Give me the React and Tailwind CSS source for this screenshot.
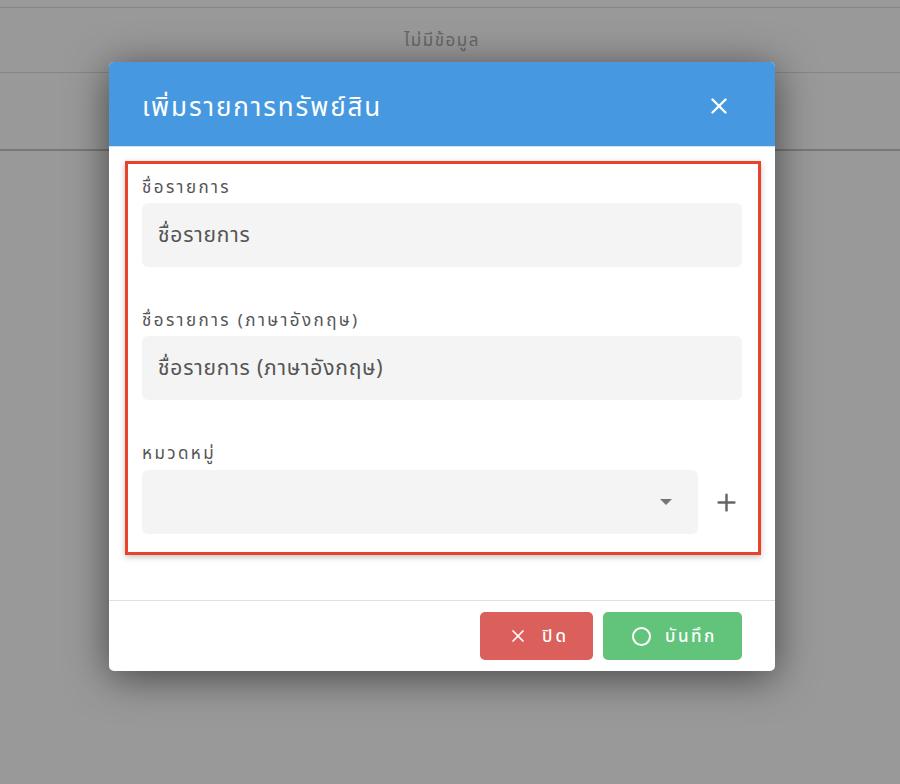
import { X, Plus } from 'lucide-react'

const font = { fontFamily: '"Noto Sans", "Noto Sans Thai", sans-serif' }

function Field({ label, placeholder }) {
  return (
    <div>
      <div className="text-[17px] leading-6 tracking-[2.4px] text-[#555555] mb-1">{label}</div>
      <div className="h-16 rounded-md bg-[#f4f4f4] flex items-center px-4 text-[21px] tracking-[0.8px] text-[#555555]">
        {placeholder}
      </div>
    </div>
  )
}

export default function App() {
  return (
    <div className="relative min-h-[784px] bg-white" style={font}>
      {/* page behind */}
      <div className="pt-[7px]">
        <div className="border-t border-b border-[#dedede] h-[66px] flex items-center justify-center pr-4 text-[17px] tracking-[1.5px] text-[#aaaaaa]">
          ไม่มีข้อมูล
        </div>
        <div className="h-[78px] border-b-2 border-[#c9c9c9]" />
      </div>

      {/* overlay */}
      <div className="absolute inset-0 bg-black/40">
        <div className="ml-[109px] mt-[62px] w-[666px] rounded-[5px] bg-white shadow-[0_6px_40px_rgba(0,0,0,0.55)] overflow-hidden">
          <div className="h-[85px] bg-[#4699e0] border-b border-[#cfe2f4] flex items-center justify-between pl-[33px] pr-[43px]">
            <div className="text-[26px] tracking-[1.9px] text-white pt-1">เพิ่มรายการทรัพย์สิน</div>
            <X className="text-white mt-1" size={26} strokeWidth={2.2} />
          </div>

          <div className="pt-[14px] pb-[45px] pl-4 pr-[14px]">
            <div className="border-[3px] border-[#e8432a] shadow-[0_2px_6px_rgba(0,0,0,0.25)] pt-[11px] pb-[18px] pl-[14px] pr-4 flex flex-col gap-[41px]">
              <Field label="ชื่อรายการ" placeholder="ชื่อรายการ" />
              <Field label="ชื่อรายการ (ภาษาอังกฤษ)" placeholder="ชื่อรายการ (ภาษาอังกฤษ)" />
              <div>
                <div className="text-[17px] leading-6 tracking-[2.4px] text-[#555555] mb-[5px]">หมวดหมู่</div>
                <div className="flex items-center">
                  <div className="h-16 w-[556px] rounded-md bg-[#f4f4f4] flex items-center justify-end pr-[26px]">
                    <div className="w-0 h-0 border-l-[6px] border-r-[6px] border-t-[6px] border-l-transparent border-r-transparent border-t-[#757575]" />
                  </div>
                  <Plus className="text-[#666666] ml-[15px]" size={27} strokeWidth={2.2} />
                </div>
              </div>
            </div>
          </div>

          <div className="border-t border-[#e0e0e0] pt-[11px] pb-[11px] pr-[33px] flex justify-end gap-[10px]">
            <button className="w-[113px] h-12 rounded-[5px] bg-[#db5f5b] text-white flex items-center justify-center gap-[14px] pl-1 text-[17px] font-medium tracking-[3px]">
              <X size={20} strokeWidth={2} />
              ปิด
            </button>
            <button className="w-[139px] h-12 rounded-[5px] bg-[#62c47b] text-white flex items-center justify-center gap-[14px] pl-1 text-[17px] font-medium tracking-[2.5px]">
              <span className="w-[19px] h-[19px] rounded-full border-2 border-white" />
              บันทึก
            </button>
          </div>
        </div>
      </div>
    </div>
  )
}
